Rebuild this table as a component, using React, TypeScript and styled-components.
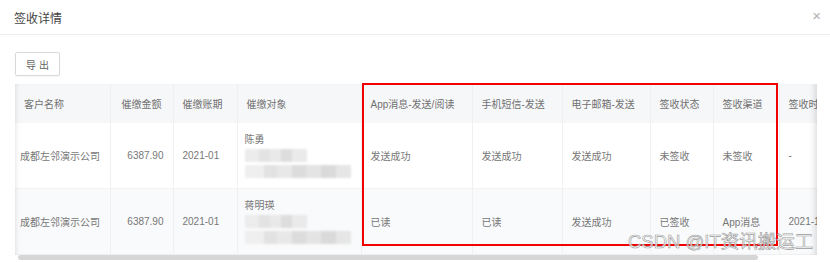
import React from 'react';
import styled, {createGlobalStyle} from "styled-components";

const GlobalStyle = createGlobalStyle`
body {
margin: 0;
background: #fff;
font-family: "Liberation Sans", "Noto Sans CJK SC", sans-serif;
}
`

type Col = { title: string, width: number, align?: 'left' | 'right' }

const columns: Col[] = [
    {title: '客户名称', width: 95},
    {title: '催缴金额', width: 63, align: 'right'},
    {title: '催缴账期', width: 64},
    {title: '催缴对象', width: 124},
    {title: 'App消息-发送/阅读', width: 111},
    {title: '手机短信-发送', width: 90},
    {title: '电子邮箱-发送', width: 88},
    {title: '签收状态', width: 63},
    {title: '签收渠道', width: 66},
    {title: '签收时间', width: 110},
]

const rows = [
    {name: '成都左邻演示公司', amount: '6387.90', period: '2021-01', person: '陈勇', app: '发送成功', sms: '发送成功', mail: '发送成功', status: '未签收', channel: '未签收', time: '-'},
    {name: '成都左邻演示公司', amount: '6387.90', period: '2021-01', person: '蒋明瑛', app: '已读', sms: '已读', mail: '发送成功', status: '已签收', channel: 'App消息', time: '2021-11-08'},
]

export default function App() {
    return (
        <StyledPage>
            <GlobalStyle/>
            <StyledHeader>
                <StyledTitle>签收详情</StyledTitle>
                <StyledClose>×</StyledClose>
            </StyledHeader>
            <StyledBody>
                <StyledButton>导 出</StyledButton>
                <StyledTableWrap>
                    <StyledTable>
                        <colgroup>
                            {columns.map(c => <col key={c.title} style={{width: c.width}}/>)}
                        </colgroup>
                        <thead>
                        <tr>
                            {columns.map(c => (
                                <StyledTh key={c.title} $align={c.align}>{c.title}</StyledTh>
                            ))}
                        </tr>
                        </thead>
                        <tbody>
                        {rows.map((r, i) => (
                            <StyledTr key={i} $striped={i % 2 === 1}>
                                <StyledTd $pad={5}>{r.name}</StyledTd>
                                <StyledTd $align="right">{r.amount}</StyledTd>
                                <StyledTd>{r.period}</StyledTd>
                                <StyledTd>
                                    <StyledPerson>
                                        <span>{r.person}</span>
                                        <StyledMosaic $w={62}/>
                                        <StyledMosaic $w={106} $dark/>
                                    </StyledPerson>
                                </StyledTd>
                                <StyledTd>{r.app}</StyledTd>
                                <StyledTd>{r.sms}</StyledTd>
                                <StyledTd>{r.mail}</StyledTd>
                                <StyledTd>{r.status}</StyledTd>
                                <StyledTd>{r.channel}</StyledTd>
                                <StyledTd>{r.time}</StyledTd>
                            </StyledTr>
                        ))}
                        </tbody>
                    </StyledTable>
                    <StyledScrollTrack>
                        <StyledScrollThumb/>
                    </StyledScrollTrack>
                </StyledTableWrap>
            </StyledBody>
            <StyledMark/>
            <StyledWatermark>CSDN @IT资讯搬运工</StyledWatermark>
        </StyledPage>
    );
};

const StyledPage = styled.div`
position: relative;
width: 830px;
height: 262px;
overflow: hidden;
`

const StyledHeader = styled.div`
display: flex;
align-items: center;
justify-content: space-between;
height: 34px;
padding: 0 9px 0 14px;
border-bottom: 1px solid #ececec;
`

const StyledTitle = styled.div`
font-size: 12px;
color: #444;
`

const StyledClose = styled.div`
font-size: 15px;
color: #b0b0b0;
line-height: 1;
margin-top: -3px;
`

const StyledBody = styled.div`
padding: 17px 13px 0 15px;
display: flex;
flex-direction: column;
align-items: flex-start;
gap: 8px;
`

const StyledButton = styled.button`
height: 24px;
width: 45px;
padding: 0;
border: 1px solid #d9d9d9;
border-radius: 2px;
background: #fff;
font-family: inherit;
font-size: 10px;
color: #666;
box-shadow: 0 1px 2px rgba(0, 0, 0, 0.04);
`

const StyledTableWrap = styled.div`
position: relative;
width: 802px;
overflow: hidden;

&::after {
content: "";
position: absolute;
inset: 0 0 6px 0;
pointer-events: none;
box-shadow: inset 5px 0 5px -4px rgba(0, 0, 0, 0.1), inset -6px 0 6px -4px rgba(0, 0, 0, 0.14);
}
`

const StyledTable = styled.table`
table-layout: fixed;
border-collapse: collapse;
width: 874px;
font-size: 10px;
color: #777;
`

const StyledTh = styled.th<{ $align?: string }>`
height: 39px;
padding: 0 ${p => p.$align === 'right' ? 11 : 9}px 0 9px;
background: #f6f7f9;
font-weight: normal;
text-align: ${p => p.$align || 'left'};
white-space: nowrap;
overflow: hidden;
color: #707070;
border-right: 1px solid #efefef;
`

const StyledTr = styled.tr<{ $striped?: boolean }>`
background: ${p => p.$striped ? '#f9fafb' : '#fff'};
`

const StyledTd = styled.td<{ $align?: string, $pad?: number }>`
height: 65px;
padding: 0 9px 0 ${p => p.$pad ?? 9}px;
text-align: ${p => p.$align || 'left'};
white-space: nowrap;
overflow: hidden;
border-right: 1px solid #f0f0f0;
border-bottom: 1px solid #f2f2f2;
`

const StyledPerson = styled.div`
display: flex;
flex-direction: column;
align-items: flex-start;
line-height: 16px;
margin-left: -2px;
`

const StyledMosaic = styled.div<{ $w: number, $dark?: boolean }>`
width: ${p => p.$w}px;
height: 13px;
margin: 1px 0 2px;
filter: blur(1.2px);
background: ${p => p.$dark
    ? 'linear-gradient(90deg, #efefef 0 18%, #e2e2e2 18% 30%, #e8e8e8 30% 44%, #dcdcdc 44% 58%, #e4e4e4 58% 72%, #dadada 72% 86%, #e6e6e6 86%)'
    : 'linear-gradient(90deg, #ececec 0 22%, #e3e3e3 22% 40%, #e9e9e9 40% 58%, #dddddd 58% 76%, #eaeaea 76%)'};
`

const StyledScrollTrack = styled.div`
height: 6px;
padding: 0 3px;
background: #fff;
`

const StyledScrollThumb = styled.div`
width: 740px;
height: 5px;
border-radius: 3px;
background: #d6d6d6;
`

const StyledMark = styled.div`
position: absolute;
left: 362px;
top: 83px;
width: 412px;
height: 159px;
border: 2px solid #f20000;
pointer-events: none;
`

const StyledWatermark = styled.div`
position: absolute;
left: 628px;
top: 230px;
font-size: 18.5px;
line-height: 24px;
color: rgba(255, 255, 255, 0.75);
-webkit-text-stroke: 0.6px #9a9a9a;
white-space: nowrap;
`
